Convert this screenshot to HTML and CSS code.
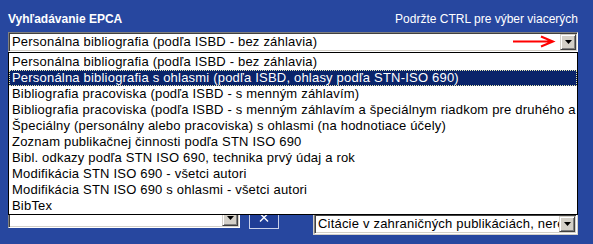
FILE: index.html
```html
<!DOCTYPE html>
<html lang="sk">
<head>
<meta charset="utf-8">
<title>Vyhľadávanie EPCA</title>
<link rel="stylesheet" href="styles.css">
</head>
<body>
<div class="page">
  <div class="header">
    <span class="title">Vyhľadávanie EPCA</span>
    <span class="hint">Podržte CTRL pre výber viacerých</span>
  </div>
  <div class="combo">
    <span class="combo-text">Personálna bibliografia (podľa ISBD - bez záhlavia)</span>
    <span class="drop-btn"><svg width="7" height="4" viewBox="0 0 7 4"><path d="M0 0h7L3.5 4z" fill="#000"/></svg></span>
  </div>
  <svg class="red-arrow" width="44" height="14" viewBox="0 0 44 14">
    <path d="M1 6.5H41M29 1.5L41 6.5L29 11.5" fill="none" stroke="#ff0000" stroke-width="2"/>
  </svg>
  <div class="bottom">
    <div class="combo combo-left">
      <span class="combo-text"></span>
      <span class="drop-btn"><svg width="7" height="4" viewBox="0 0 7 4"><path d="M0 0h7L3.5 4z" fill="#000"/></svg></span>
    </div>
    <div class="xbtn"><svg width="10" height="9" viewBox="0 0 10 9"><path d="M1 0.5L9 8.5M9 0.5L1 8.5" stroke="#fff" stroke-width="1.4" fill="none"/></svg></div>
    <div class="right-wrap">
      <div class="combo combo-right">
        <span class="combo-text">Citácie v zahraničných publikáciách, nerecenzované</span>
        <span class="drop-btn"><svg width="7" height="4" viewBox="0 0 7 4"><path d="M0 0h7L3.5 4z" fill="#000"/></svg></span>
      </div>
    </div>
  </div>
  <div class="list">
    <div class="item">Personálna bibliografia (podľa ISBD - bez záhlavia)</div>
    <div class="item selected">Personálna bibliografia s ohlasmi (podľa ISBD, ohlasy podľa STN-ISO 690)</div>
    <div class="item">Bibliografia pracoviska (podľa ISBD - s menným záhlavím)</div>
    <div class="item">Bibliografia pracoviska (podľa ISBD - s menným záhlavím a špeciálnym riadkom pre druhého a ďalších autorov)</div>
    <div class="item">Špeciálny (personálny alebo pracoviska) s ohlasmi (na hodnotiace účely)</div>
    <div class="item">Zoznam publikačnej činnosti podľa STN ISO 690</div>
    <div class="item">Bibl. odkazy podľa STN ISO 690, technika prvý údaj a rok</div>
    <div class="item">Modifikácia STN ISO 690 - všetci autori</div>
    <div class="item">Modifikácia STN ISO 690 s ohlasmi - všetci autori</div>
    <div class="item">BibTex</div>
  </div>
</div>
</body>
</html>
```
FILE: styles.css
```css
html, body {
  margin: 0;
  padding: 0;
}
body {
  background: #27479f;
  font-family: "Liberation Sans", Arial, sans-serif;
  width: 593px;
  height: 244px;
  overflow: hidden;
}
.page {
  position: relative;
  padding: 12px 15px 0 8px;
}
.header {
  display: flex;
  justify-content: space-between;
  line-height: 14px;
  color: #fff;
  font-size: 12px;
}
.title {
  font-weight: bold;
}
.combo {
  display: flex;
  align-items: stretch;
  box-sizing: border-box;
  height: 20px;
  margin-top: 6px;
  background: #fff;
  border: 1px solid;
  border-color: #808080 #fff #fff #808080;
  box-shadow: inset 1px 1px #404040, inset -1px -1px #d4d0c8;
  padding: 1px;
}
.combo-text {
  flex: 1;
  font-size: 13px;
  line-height: 16px;
  letter-spacing: 0.2px;
  padding-left: 2px;
  white-space: nowrap;
  overflow: hidden;
  color: #000;
}
.drop-btn {
  width: 16px;
  height: 16px;
  box-sizing: border-box;
  background: #d4d0c8;
  border: 1px solid;
  border-color: #d4d0c8 #404040 #404040 #d4d0c8;
  box-shadow: inset 1px 1px #fff, inset -1px -1px #808080;
  display: flex;
  align-items: center;
  justify-content: center;
}
.drop-btn svg {
  display: block;
}
.red-arrow {
  position: absolute;
  left: 512px;
  top: 35px;
}
.bottom {
  display: flex;
  align-items: flex-start;
  margin-top: 154px;
}
.combo-left {
  width: 232px;
  margin-top: 2px;
}
.xbtn {
  box-sizing: border-box;
  width: 30px;
  height: 23px;
  margin-left: 9px;
  border: 1px solid #c8d0ea;
  background: #1f3d96;
  display: flex;
  justify-content: center;
  padding-top: 6px;
}
.xbtn svg {
  display: block;
}
.right-wrap {
  box-sizing: border-box;
  width: 265px;
  height: 22px;
  margin-left: 34px;
  margin-top: 7px;
  border: 1px solid #d4d0c8;
}
.combo-right {
  margin-top: 0;
}
.list {
  position: absolute;
  left: 8px;
  top: 52px;
  width: 570px;
  box-sizing: border-box;
  border: 1px solid #000;
  background: #fff;
  padding: 1px 0 0 0;
  font-size: 13px;
  line-height: 16px;
  letter-spacing: 0.2px;
}
.item {
  height: 16px;
  padding-left: 3px;
  white-space: nowrap;
  overflow: hidden;
  color: #000;
}
.item.selected {
  background: #0a246a;
  color: #fff;
  outline: 1px dotted #e8e8b0;
  outline-offset: -1px;
}
```
